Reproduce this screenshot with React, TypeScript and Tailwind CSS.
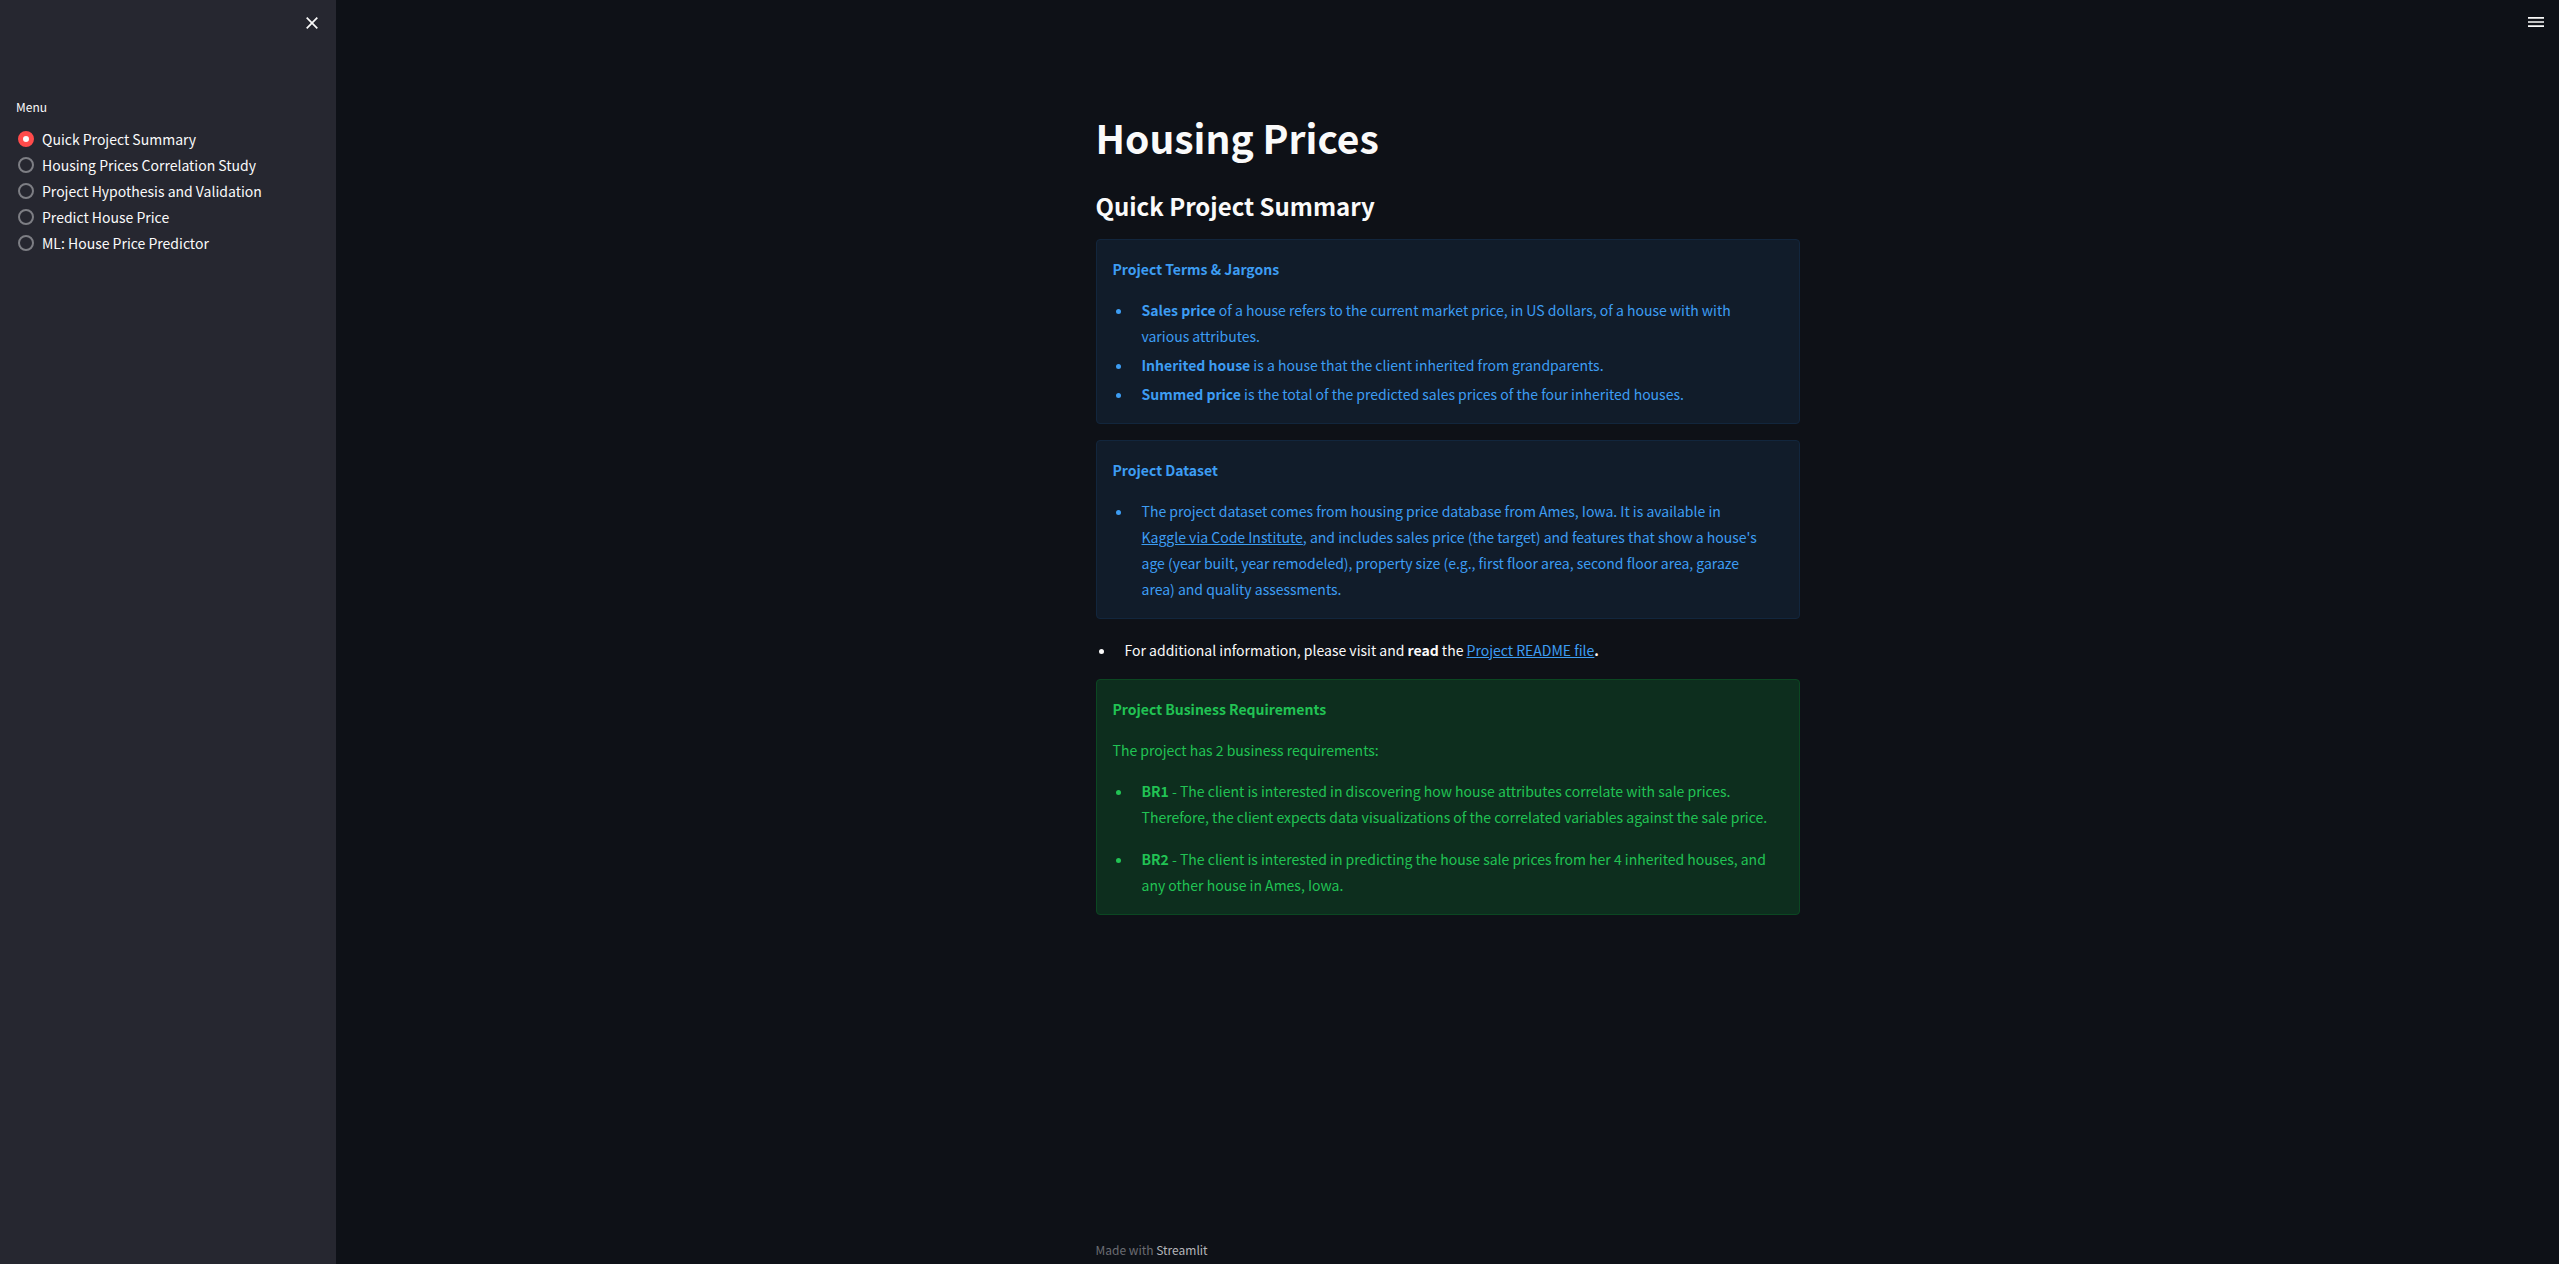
import type { ReactNode } from "react";

const pages = [
  "Quick Project Summary",
  "Housing Prices Correlation Study",
  "Project Hypothesis and Validation",
  "Predict House Price",
  "ML: House Price Predictor",
];

function Item({ children }: { children: ReactNode }) {
  return <li className="ml-5 pl-[9px]">{children}</li>;
}

function Info({ children }: { children: ReactNode }) {
  return (
    <section className="flex flex-col gap-[15px] rounded border border-[#12263d] bg-[#111c2a] p-4 text-[#3d9df3]">
      {children}
    </section>
  );
}

function Sidebar() {
  return (
    <aside className="w-[336px] shrink-0 bg-[#262730]">
      <div className="flex justify-end pt-3 pr-[13px]">
        <button type="button" aria-label="Close sidebar" className="flex size-[22px] items-center justify-center">
          <svg viewBox="0 0 12 12" className="size-3" fill="none" stroke="currentColor" strokeWidth="1.7">
            <path d="M.7.7l10.6 10.6M11.3.7.7 11.3" />
          </svg>
        </button>
      </div>
      <fieldset className="px-4 pt-[62px]">
        <legend className="contents">
          <span className="block h-[22px] text-[12px] leading-[22px]">Menu</span>
        </legend>
        <div className="mt-2 flex flex-col">
          {pages.map((page, i) => (
            <label key={page} className="flex h-[26px] items-center gap-2 pl-[2px]">
              <input
                type="radio"
                name="page"
                defaultChecked={i === 0}
                className="size-4 appearance-none rounded-full border-2 border-[#7d7e84] bg-[#262730] checked:border-[5px] checked:border-[#ff4b4b] checked:bg-[#fafafa]"
              />
              <span>{page}</span>
            </label>
          ))}
        </div>
      </fieldset>
    </aside>
  );
}

export default function App() {
  return (
    <div className="flex min-h-screen bg-[#0e1117] font-['Noto_Sans_CJK_SC',sans-serif] text-[14px] leading-[26px] text-[#fafafa]">
      <Sidebar />
      <div className="flex flex-1 flex-col">
        <header className="flex h-[46px] items-start justify-end pt-[10px] pr-[11px]">
          <button type="button" aria-label="Main menu" className="flex size-6 items-center justify-center">
            <svg viewBox="0 0 16 10" className="h-[10px] w-4" fill="currentColor">
              <path d="M0 0h16v1.7H0zM0 4.15h16v1.7H0zM0 8.3h16V10H0z" />
            </svg>
          </button>
        </header>
        <main className="mx-auto w-full max-w-[736px] flex-1 px-4 pt-[65px]">
          <h1 className="text-[39px] leading-[53px] font-bold">Housing Prices</h1>
          <h2 className="mt-[25px] text-[24px] leading-[34px] font-semibold">Quick Project Summary</h2>
          <div className="mt-4 flex flex-col gap-4">
            <Info>
              <p className="font-bold">Project Terms &amp; Jargons</p>
              <ul className="flex list-disc flex-col gap-[3px]">
                <Item>
                  <strong>Sales price</strong> of a house refers to the current market price, in US dollars, of a house
                  with with
                  <br />
                  various attributes.
                </Item>
                <Item>
                  <strong>Inherited house</strong> is a house that the client inherited from grandparents.
                </Item>
                <Item>
                  <strong>Summed price</strong> is the total of the predicted sales prices of the four inherited houses.
                </Item>
              </ul>
            </Info>
            <Info>
              <p className="font-bold">Project Dataset</p>
              <ul className="list-disc">
                <Item>
                  The project dataset comes from housing price database from Ames, Iowa. It is available in
                  <br />
                  <a href="#dataset" className="underline">Kaggle via Code Institute</a>, and includes sales price (the
                  target) and features that show a house's
                  <br />
                  age (year built, year remodeled), property size (e.g., first floor area, second floor area, garaze
                  <br />
                  area) and quality assessments.
                </Item>
              </ul>
            </Info>
            <ul className="list-disc pt-[2px]">
              <Item>
                For additional information, please visit and <strong>read</strong> the{" "}
                <a href="#readme" className="text-[#3d9df3] underline">Project README file</a>
                <strong>.</strong>
              </Item>
            </ul>
            <section className="flex flex-col gap-[15px] rounded border border-[#0b4722] bg-[#0d2e1e] p-4 text-[#21c354]">
              <p className="font-bold">Project Business Requirements</p>
              <p>The project has 2 business requirements:</p>
              <ul className="flex list-disc flex-col gap-4">
                <Item>
                  <strong>BR1</strong> - The client is interested in discovering how house attributes correlate with
                  sale prices.
                  <br />
                  Therefore, the client expects data visualizations of the correlated variables against the sale price.
                </Item>
                <Item>
                  <strong>BR2</strong> - The client is interested in predicting the house sale prices from her 4
                  inherited houses, and
                  <br />
                  any other house in Ames, Iowa.
                </Item>
              </ul>
            </section>
          </div>
        </main>
        <footer className="mx-auto w-full max-w-[736px] px-4 pb-[3px] text-[12px] leading-[22px] text-[#6b6c72]">
          Made with <a href="#streamlit" className="text-[#b5b6ba]">Streamlit</a>
        </footer>
      </div>
    </div>
  );
}
